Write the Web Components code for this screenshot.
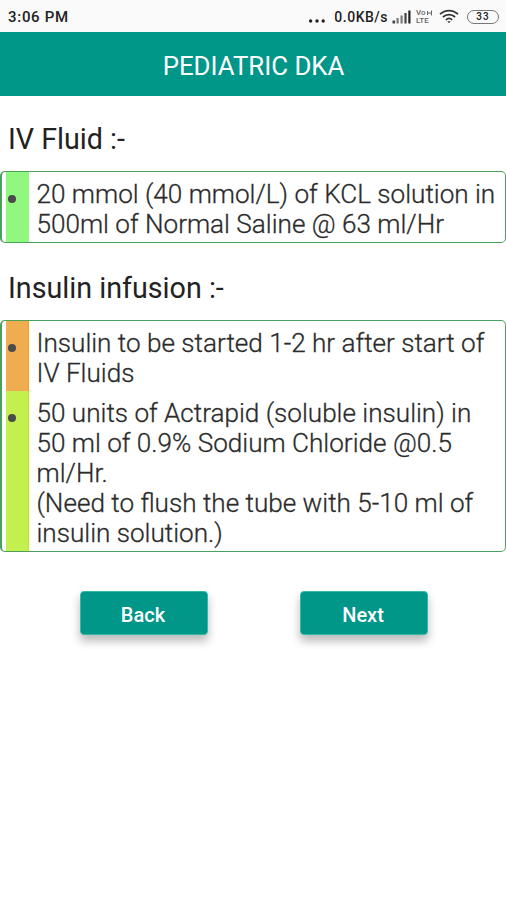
<!DOCTYPE html>
<html lang="en">
<head>
<meta charset="utf-8">
<title>Pediatric DKA</title>
<style>
  body {
    margin: 0;
    background: #fff;
    font-family: Roboto, "Liberation Sans", sans-serif;
  }
</style>
</head>
<body>
<dka-screen></dka-screen>

<script>
class StatusBar extends HTMLElement {
  constructor() {
    super();
    this.attachShadow({ mode: 'open' });
  }

  connectedCallback() {
    this.shadowRoot.innerHTML = `
      <style>
        :host {
          display: flex;
          align-items: center;
          justify-content: space-between;
          box-sizing: border-box;
          height: 32px;
          padding: 1px 7px 0 8px;
          background: #fafafa;
          color: #222;
          font-size: 15px;
          font-weight: 500;
          white-space: nowrap;
        }
        .time { letter-spacing: 0.7px; }
        .right { display: flex; align-items: center; }
        .speed { margin: 0 4px 0 8px; font-size: 14px; letter-spacing: 0.5px; }
        .volte {
          width: 16px;
          margin: 0 7px 0 5px;
          font-size: 8px;
          line-height: 8px;
          color: #666;
        }
        .vo { display: flex; align-items: center; gap: 1px; }
        svg { display: block; }
        .wifi { margin-right: 8px; }
        .battery {
          box-sizing: border-box;
          width: 32px;
          height: 14px;
          border: 1.5px solid #777;
          border-radius: 7px;
          font-size: 10px;
          line-height: 11px;
          text-align: center;
          letter-spacing: 1px;
        }
      </style>
      <span class="time">3:06 PM</span>
      <div class="right">
        <svg width="18" height="14" viewBox="0 0 18 14" fill="#222">
          <circle cx="2.6" cy="11" r="1.7"/><circle cx="9" cy="11" r="1.7"/><circle cx="15.2" cy="11" r="1.7"/>
        </svg>
        <span class="speed">0.0KB/s</span>
        <svg width="19" height="14" viewBox="0 0 19 14" fill="#444">
          <rect x="0.5" y="10.5" width="2.6" height="3"/>
          <rect x="4.5" y="8" width="2.2" height="5.5" fill="#777"/>
          <rect x="8.5" y="5.5" width="2.2" height="8" fill="#777"/>
          <rect x="12.4" y="3" width="2.2" height="10.5"/>
          <rect x="16.3" y="0.5" width="2.2" height="13" fill="#222"/>
        </svg>
        <div class="volte">
          <div class="vo">Vo<svg width="5" height="6" viewBox="0 0 5 6" stroke="#666" fill="none"><path d="M0.5 1v4M0.5 3h4M4.5 0.5v5"/></svg></div>
          <div>LTE</div>
        </div>
        <svg class="wifi" width="20" height="15" viewBox="0 0 20 15" fill="none" stroke="#333" stroke-width="1.7">
          <path d="M1 5.2C6.2 0.4 13.8 0.4 19 5.2"/>
          <path d="M3.9 8C7.5 4.8 12.5 4.8 16.1 8"/>
          <path d="M6.8 10.8c1.9-1.7 4.5-1.7 6.4 0"/>
          <path d="M8.3 12.2h3.4L10 14.3z" fill="#333" stroke="none"/>
        </svg>
        <div class="battery">33</div>
      </div>
    `;
  }
}

class TitleBar extends HTMLElement {
  constructor() {
    super();
    this.attachShadow({ mode: 'open' }).innerHTML = `
      <style>
        :host {
          display: flex;
          align-items: center;
          justify-content: center;
          box-sizing: border-box;
          height: 64px;
          padding: 3px 0 0 1px;
          background: #009688;
          color: #fff;
          font-size: 25.8px;
          white-space: nowrap;
        }
      </style>
      <span><slot></slot></span>
    `;
  }
}

class CareSection extends HTMLElement {
  constructor() {
    super();
    this.attachShadow({ mode: 'open' });
  }

  connectedCallback() {
    this.shadowRoot.innerHTML = `
      <style>
        :host { display: block; }
        h2 {
          margin: 0 0 0 8px;
          padding: 27px 0 16px;
          font-size: 28.7px;
          line-height: 32px;
          font-weight: 400;
          color: #222;
        }
        .card {
          border: 1px solid #4d9f5c;
          border-left-width: 2px;
          border-radius: 5px;
          padding-left: 4px;
        }
      </style>
      <h2>${this.getAttribute('heading')}</h2>
      <div class="card"><slot></slot></div>
    `;
  }
}

class CareItem extends HTMLElement {
  constructor() {
    super();
    this.attachShadow({ mode: 'open' }).innerHTML = `
      <style>
        :host { display: flex; }
        .stripe {
          flex: none;
          box-sizing: border-box;
          width: 23px;
          padding: 23px 0 0 2px;
          background: var(--stripe);
          border-right: 1px solid var(--edge, transparent);
        }
        .dot {
          width: 8px;
          height: 8px;
          border-radius: 50%;
          background: #484b4a;
        }
        .text {
          padding: 7px 0 3px 7.5px;
          font-size: 26.12px;
          line-height: 30px;
          font-weight: 300;
          color: #2b2b2b;
          -webkit-text-stroke: 0.3px #2b2b2b;
          white-space: nowrap;
        }
      </style>
      <div class="stripe"><div class="dot"></div></div>
      <div class="text"><slot></slot></div>
    `;
  }
}

class NavButton extends HTMLElement {
  constructor() {
    super();
    this.attachShadow({ mode: 'open' }).innerHTML = `
      <style>
        :host { display: block; }
        button {
          display: block;
          box-sizing: border-box;
          width: 128px;
          height: 44px;
          border: 1px solid #35b9aa;
          border-radius: 4px;
          padding: 3px 2px 0 0;
          background: #009688;
          color: #fff;
          font: 500 20px Roboto, "Liberation Sans", sans-serif;
          box-shadow: 0 6px 10px rgba(0, 0, 0, 0.28);
        }
      </style>
      <button><slot></slot></button>
    `;
  }
}

class DkaScreen extends HTMLElement {
  constructor() {
    super();
    this.attachShadow({ mode: 'open' });
  }

  connectedCallback() {
    this.shadowRoot.innerHTML = `
      <style>
        :host { display: block; height: 900px; overflow: hidden; }
        nav {
          display: flex;
          gap: 92px;
          height: 58px;
          padding: 39px 0 0 80px;
          overflow: hidden;
        }
        .fluid { padding-bottom: 2px; }
      </style>
      <status-bar></status-bar>
      <title-bar>PEDIATRIC DKA</title-bar>
      <care-section class="fluid" heading="IV Fluid :-">
        <care-item style="--stripe: #90f77f; padding-bottom: 0">20 mmol (40 mmol/L) of KCL solution in<br>500ml of Normal Saline @ 63 ml/Hr</care-item>
      </care-section>
      <care-section heading="Insulin infusion :-">
        <care-item style="--stripe: #efad50; --edge: #f2a01c">Insulin to be started 1-2 hr after start of<br>IV Fluids</care-item>
        <care-item style="--stripe: #c3f04e; --edge: #b4ea1c">50 units of Actrapid (soluble insulin) in<br>50 ml of 0.9% Sodium Chloride @0.5<br>ml/Hr.<br>(Need to flush the tube with 5-10 ml of<br>insulin solution.)</care-item>
      </care-section>
      <nav>
        <nav-button>Back</nav-button>
        <nav-button>Next</nav-button>
      </nav>
    `;
  }
}

customElements.define('status-bar', StatusBar);
customElements.define('title-bar', TitleBar);
customElements.define('care-section', CareSection);
customElements.define('care-item', CareItem);
customElements.define('nav-button', NavButton);
customElements.define('dka-screen', DkaScreen);
</script>
</body>
</html>
